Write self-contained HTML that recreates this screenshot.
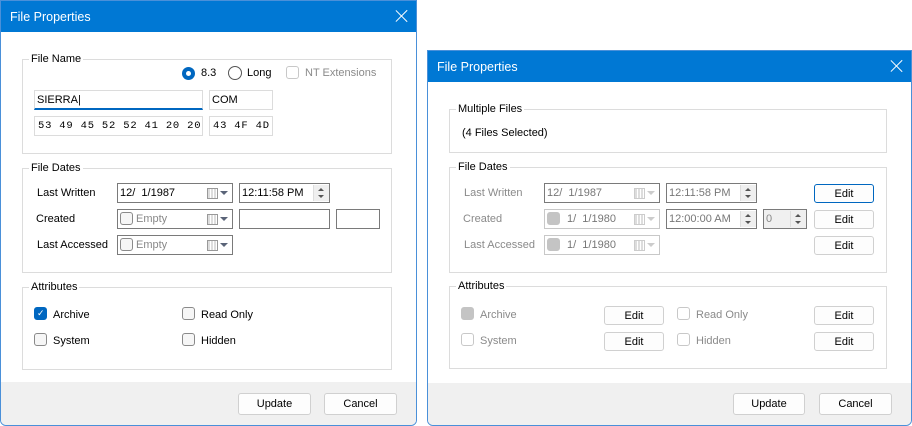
<!DOCTYPE html>
<html><head><meta charset="utf-8"><style>
*{box-sizing:border-box;margin:0;padding:0}
body{width:912px;height:426px;background:#fff;position:relative;overflow:hidden;font-family:"Liberation Sans",sans-serif;font-size:11px;color:#000}
div,span{position:absolute}
.dlg{border:1px solid #4a90d9;background:#fff;border-radius:0 0 6px 6px;overflow:hidden}
.tb{left:0;right:0;top:0;height:31px;background:#0078d4;color:#fff;font-size:12.5px}
.tb .t{left:9px;top:9px}
.x{width:12px;height:12px}
.x:before,.x:after{content:"";position:absolute;left:5px;top:-2px;width:1.3px;height:16px;background:#fff;transform:rotate(45deg)}
.x:after{transform:rotate(-45deg)}
.foot{left:0;right:0;bottom:0;background:#f0f0f0}
.grp{border:1px solid #dcdcdc}
.gl{background:#fff;padding:0 2px;line-height:14px}
.l{line-height:14px;white-space:nowrap}
.g{color:#8a8a8a}
.box{border:1px solid #7a7a7a;background:#fff;line-height:18px;padding-left:2px;white-space:nowrap}
.dbox{border:1px solid #c8c8c8}
.btn{border:1px solid #d0d0d0;border-radius:3px;background:#fdfdfd;text-align:center;line-height:21px}
.cb{width:13px;height:13px;border:1px solid #8a8a8a;border-radius:3px;background:#f6f6f6}
.cbd{border-color:#c8c8c8;background:#fff}
.cbc{background:#0067c0;border-color:#0067c0}
.cbg{background:#c4c4c4;border-color:#c4c4c4}
.cal{width:11px;height:11px;border:1px solid #999;background:repeating-linear-gradient(90deg,#ddd 0 2px,#fff 2px 3px)}
.arr{width:0;height:0;border-left:4px solid transparent;border-right:4px solid transparent;border-top:4px solid #5a6478}
.spin{width:16px;background:#efefef;border-left:1px solid #ddd}
.spin:before{content:"";position:absolute;left:4px;top:3px;border-left:3px solid transparent;border-right:3px solid transparent;border-bottom:3px solid #555}
.spin:after{content:"";position:absolute;left:4px;top:10px;border-left:3px solid transparent;border-right:3px solid transparent;border-top:3px solid #555}
.mono{font-family:"Liberation Mono",monospace;font-size:10.5px;letter-spacing:0.8px}
</style></head><body>

<div class="dlg" style="left:0;top:0;width:417px;height:426px">
  <div class="tb"><div class="t">File Properties</div><div class="x" style="left:395px;top:9px"></div></div>
  <div class="foot" style="top:381px"></div>
  <div class="btn" style="left:237px;top:392px;width:73px;height:22px">Update</div>
  <div class="btn" style="left:323px;top:392px;width:73px;height:22px">Cancel</div>
</div>
<div class="grp" style="left:22px;top:59px;width:370px;height:95px"></div>
<div class="gl l" style="left:29px;top:52px">File Name</div>
<div style="left:182px;top:67px;width:13px;height:13px;border-radius:50%;background:#0067c0"><div style="left:4px;top:4px;width:5px;height:5px;border-radius:50%;background:#fff"></div></div>
<div class="l" style="left:201px;top:66px">8.3</div>
<div style="left:228px;top:66px;width:14px;height:14px;border-radius:50%;border:1px solid #555"></div>
<div class="l" style="left:247px;top:66px">Long</div>
<div class="cb cbd" style="left:286px;top:66px"></div>
<div class="l g" style="left:305px;top:66px">NT Extensions</div>
<div class="box" style="left:34px;top:90px;width:169px;height:20px;border-color:#dcdcdc;border-bottom:2px solid #0067c0">SIERRA|</div>
<div class="box" style="left:209px;top:90px;width:64px;height:20px;border-color:#dcdcdc">COM</div>
<div class="box mono" style="left:34px;top:116px;width:169px;height:20px;border-color:#dcdcdc;padding-left:3px">53 49 45 52 52 41 20 20</div>
<div class="box mono" style="left:209px;top:116px;width:64px;height:20px;border-color:#dcdcdc;padding-left:3px">43 4F 4D</div>

<div class="grp" style="left:22px;top:168px;width:370px;height:105px"></div>
<div class="gl l" style="left:29px;top:161px">File Dates</div>
<div class="l" style="left:37px;top:186px">Last Written</div>
<div class="l" style="left:36px;top:212px">Created</div>
<div class="l" style="left:37px;top:238px">Last Accessed</div>
<div class="box" style="left:117px;top:183px;width:116px;height:20px">12/&nbsp; 1/1987<div class="cal" style="left:89px;top:4px"></div><div class="arr" style="left:102px;top:7px"></div></div>
<div class="box" style="left:239px;top:183px;width:91px;height:20px">12:11:58 PM<div class="spin" style="right:0;top:1px;height:16px"></div></div>
<div class="box" style="left:117px;top:209px;width:116px;height:20px;color:#888"><div class="cb" style="left:2px;top:2px"></div><span style="left:18px;top:1px;line-height:16px">Empty</span><div class="cal" style="left:89px;top:4px"></div><div class="arr" style="left:102px;top:7px"></div></div>
<div class="box" style="left:239px;top:209px;width:91px;height:20px"></div>
<div class="box" style="left:336px;top:209px;width:44px;height:20px"></div>
<div class="box" style="left:117px;top:235px;width:116px;height:20px;color:#888"><div class="cb" style="left:2px;top:2px"></div><span style="left:18px;top:1px;line-height:16px">Empty</span><div class="cal" style="left:89px;top:4px"></div><div class="arr" style="left:102px;top:7px"></div></div>

<div class="grp" style="left:22px;top:287px;width:370px;height:83px"></div>
<div class="gl l" style="left:29px;top:280px">Attributes</div>
<div class="cb cbc" style="left:34px;top:307px"><span style="left:2px;top:0px;color:#fff;font-size:9px">✓</span></div>
<div class="l" style="left:53px;top:308px">Archive</div>
<div class="cb" style="left:182px;top:307px"></div>
<div class="l" style="left:201px;top:308px">Read Only</div>
<div class="cb" style="left:34px;top:333px"></div>
<div class="l" style="left:53px;top:334px">System</div>
<div class="cb" style="left:182px;top:333px"></div>
<div class="l" style="left:201px;top:334px">Hidden</div>

<div class="dlg" style="left:427px;top:50px;width:485px;height:376px">
  <div class="tb"><div class="t">File Properties</div><div class="x" style="left:463px;top:9px"></div></div>
  <div class="foot" style="top:332px"></div>
  <div class="btn" style="left:305px;top:342px;width:72px;height:22px">Update</div>
  <div class="btn" style="left:391px;top:342px;width:73px;height:22px">Cancel</div>
</div>
<div class="grp" style="left:449px;top:109px;width:438px;height:44px"></div>
<div class="gl l" style="left:456px;top:102px">Multiple Files</div>
<div class="l" style="left:462px;top:126px">(4 Files Selected)</div>

<div class="grp" style="left:449px;top:167px;width:438px;height:106px"></div>
<div class="gl l" style="left:456px;top:160px">File Dates</div>
<div class="l g" style="left:464px;top:186px">Last Written</div>
<div class="l g" style="left:463px;top:212px">Created</div>
<div class="l g" style="left:464px;top:238px">Last Accessed</div>
<div class="box" style="left:544px;top:183px;width:116px;height:20px;color:#777">12/&nbsp; 1/1987<div class="cal" style="left:89px;top:4px;border-color:#ccc"></div><div class="arr" style="left:102px;top:7px;border-top-color:#ccc"></div></div>
<div class="box" style="left:666px;top:183px;width:91px;height:20px;color:#777">12:11:58 PM<div class="spin" style="right:0;top:1px;height:16px"></div></div>
<div class="box dbox" style="left:544px;top:209px;width:116px;height:20px;color:#777"><div class="cb cbg" style="left:2px;top:2px"></div><span style="left:22px;top:1px;line-height:16px">1/&nbsp; 1/1980</span><div class="cal" style="left:89px;top:4px;border-color:#ccc"></div><div class="arr" style="left:102px;top:7px;border-top-color:#ccc"></div></div>
<div class="box" style="left:666px;top:209px;width:91px;height:20px;color:#777">12:00:00 AM<div class="spin" style="right:0;top:1px;height:16px"></div></div>
<div class="box" style="left:763px;top:209px;width:44px;height:20px;background:#f0f0f0;color:#888">0<div class="spin" style="right:0;top:1px;height:16px"></div></div>
<div class="box dbox" style="left:544px;top:235px;width:116px;height:20px;color:#777"><div class="cb cbg" style="left:2px;top:2px"></div><span style="left:22px;top:1px;line-height:16px">1/&nbsp; 1/1980</span><div class="cal" style="left:89px;top:4px;border-color:#ccc"></div><div class="arr" style="left:102px;top:7px;border-top-color:#ccc"></div></div>
<div class="btn" style="left:814px;top:184px;width:60px;height:19px;border-color:#0067c0;line-height:18px">Edit</div>
<div class="btn" style="left:814px;top:210px;width:60px;height:19px;line-height:18px">Edit</div>
<div class="btn" style="left:814px;top:236px;width:60px;height:19px;line-height:18px">Edit</div>

<div class="grp" style="left:449px;top:286px;width:438px;height:83px"></div>
<div class="gl l" style="left:456px;top:279px">Attributes</div>
<div class="cb cbg" style="left:461px;top:307px"></div>
<div class="l g" style="left:480px;top:308px">Archive</div>
<div class="cb cbd" style="left:677px;top:307px"></div>
<div class="l g" style="left:696px;top:308px">Read Only</div>
<div class="cb cbd" style="left:461px;top:333px"></div>
<div class="l g" style="left:480px;top:334px">System</div>
<div class="cb cbd" style="left:677px;top:333px"></div>
<div class="l g" style="left:696px;top:334px">Hidden</div>
<div class="btn" style="left:604px;top:306px;width:60px;height:19px;line-height:18px">Edit</div>
<div class="btn" style="left:604px;top:332px;width:60px;height:19px;line-height:18px">Edit</div>
<div class="btn" style="left:814px;top:306px;width:60px;height:19px;line-height:18px">Edit</div>
<div class="btn" style="left:814px;top:332px;width:60px;height:19px;line-height:18px">Edit</div>
</body></html>
